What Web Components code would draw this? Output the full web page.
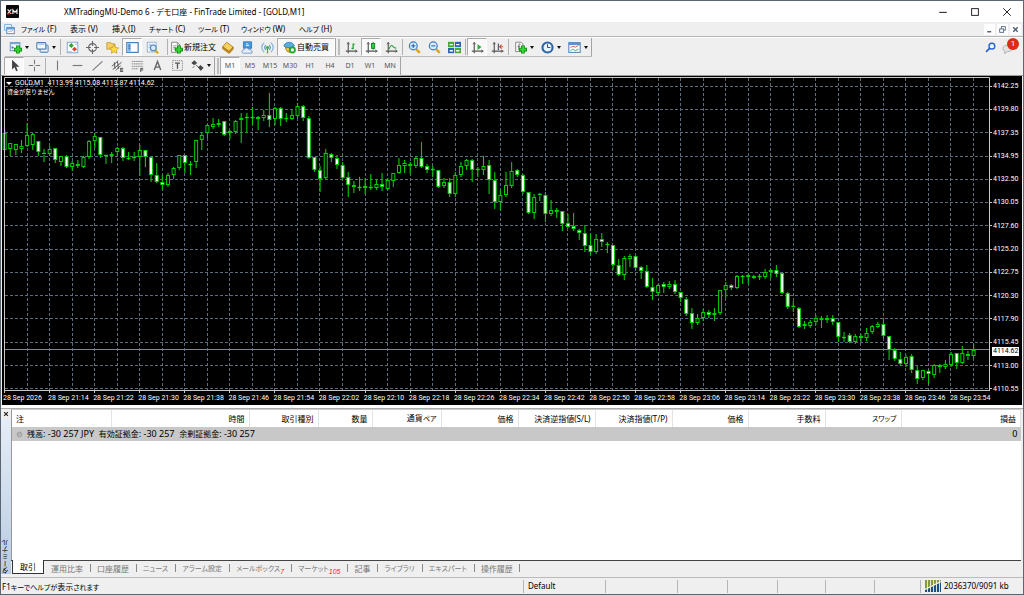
<!DOCTYPE html>
<html lang="ja">
<head>
<meta charset="utf-8">
<title>XMTradingMU-Demo 6</title>
<style>
html,body{margin:0;height:100%}
body{font:8px/12px "Noto Sans","Noto Sans CJK JP",sans-serif;color:#000;background:#fff;overflow:hidden}
</style>
</head>
<body>
<mt-window></mt-window>
<script>
const define=(name,html,setup)=>customElements.define(name,class extends HTMLElement{
  constructor(){super();this.attachShadow({mode:'open'});}
  connectedCallback(){
    const t=document.createElement('template');
    t.innerHTML=typeof html==='function'?html(this):html;
    this.shadowRoot.replaceChildren(t.content.cloneNode(true));
    if(setup)setup(this);
  }
});

const plus='<path d="M11 5.500v10M6 10.500h10" stroke="#128a12" stroke-width="4.600"/><path d="M11 6.500v8M7 10.500h8" stroke="#35d435" stroke-width="2.600"/>';
const axes='<path d="M4 2v13M1 12.500h14" stroke="#555" stroke-width="1.400" fill="none"/><path d="M2.500 4L4 1.500 5.500 4M12.500 11l2.500 1.500-2.500 1.500" fill="none" stroke="#555"/>';
const glass=s=>`<path d="M10 10l4.500 4.500" stroke="#d9a520" stroke-width="3"/><circle cx="6.500" cy="6" r="4.800" fill="#dcecfb" stroke="#3b7cc0" stroke-width="1.500"/>${s}`;
const ICONS={
 app:'<rect width="16" height="16" rx="1" fill="#080808"/><path d="M2 5.500l4.500 5.500M6.500 5.500L2 11M8.500 11V6l2.500 3 2.500-3v5" stroke="#eee" stroke-width="1.500" fill="none"/><path d="M2 11.500l4-2.500" stroke="#d22" stroke-width="1.300"/>',
 mdi:'<rect x="1" y="1" width="10" height="8" fill="#e9f2fb" stroke="#5c93cc"/><rect x="4" y="5" width="11" height="9" fill="#fff" stroke="#5c93cc" stroke-width="1.500"/><path d="M4 7h11" stroke="#5c93cc" stroke-width="2"/><path d="M6 12l2-2 2 1 3-2" stroke="#5c93cc" fill="none"/>',
 newchart:'<rect x="1.500" y="2" width="12" height="10" fill="#f4f9ff" stroke="#4a7fb5"/><path d="M1.500 3h12" stroke="#7aa9d8" stroke-width="2"/><path d="M4 6v4M3 8h3" stroke="#55779a"/>'+plus,
 profiles:'<rect x="5" y="5" width="10" height="9" rx="1" fill="#b7d1ed" stroke="#4a7fb5"/><rect x="1" y="2" width="11" height="8" rx="1" fill="#f3f8fe" stroke="#4a7fb5" stroke-width="1.300"/><path d="M3 4h7" stroke="#8ab3dc"/><path d="M6 11.500h8" stroke="#fff"/>',
 market:'<rect x="1.500" y="1.500" width="13" height="13" fill="#fff" stroke="#6a9bd0"/><path d="M3.500 5.500L6.500 2.500 9.500 5.500 6.500 8.500z" fill="#2aa82a"/><path d="M7.500 10l3-3 3 3-3 3z" fill="#e0402a"/><path d="M3 13h4M11 4h3" stroke="#aac"/>',
 cross:'<circle cx="8" cy="8" r="4.800" fill="none" stroke="#666" stroke-width="1.400"/><path d="M8 0v6M8 10v6M0 8h6M10 8h6" stroke="#666" stroke-width="1.400"/>',
 favorites:'<path d="M1 2h5l1 1.500h4V10H1z" fill="#f3cf68" stroke="#c2972c"/><path d="M10 4.500l1.700 3.500 3.800.500-2.800 2.600.700 3.900-3.400-1.900-3.400 1.900.700-3.900L4.500 8.500l3.800-.500z" fill="#ffdf45" stroke="#bc8b12" stroke-width=".8"/>',
 nav:'<rect x="1" y="2" width="14" height="12" fill="#fff" stroke="#4682bf" stroke-width="1.500"/><rect x="2" y="3" width="4" height="10" fill="#8db8e4"/><path d="M3 5h2M3 7h2M3 9h2" stroke="#2b5c94"/>',
 tester:'<rect x="1.500" y="1.500" width="11" height="12" fill="#f3f8fd" stroke="#89a9c8"/><path d="M3 5h8M5 3v8M3 8h7" stroke="#9cbcdc"/><path d="M11 11l4 4" stroke="#d9a520" stroke-width="2.500"/><circle cx="9" cy="8.500" r="3.500" fill="#d7e9fa" stroke="#4f86bd" stroke-width="1.300"/>',
 order:'<path d="M2 1.500h7l3 3V14H2z" fill="#fafafa" stroke="#777"/><path d="M9 1.500V5h3M4 6h4M4 8h4M4 10h2" fill="none" stroke="#888"/>'+plus,
 book:'<path d="M2 7l5-5.500 8 6-5 5.500z" fill="#f7cf5d" stroke="#a9781a"/><path d="M2 7v2.500l8 6 5-5.500V7.500L10 13z" fill="#c88f1f" stroke="#94640f" stroke-width=".7"/>',
 mail:'<path d="M3 1h10v8H3z" fill="#3f9ade" stroke="#2975b5"/><path d="M6 3.500h3M6 5.500h4" stroke="#fff"/><path d="M3 15c-3-.500-2.500-4 .500-4 .500-3 5-3.500 6-.500 2-1 3.500.500 3 1.800 2 .200 2 2.700 0 2.700z" fill="#e6eef8" stroke="#6488ba"/>',
 signal:'<path d="M4 2C0 5 0 11 4 14M12 2c4 3 4 9 0 12" fill="none" stroke="#7db1dc" stroke-width="1.400"/><path d="M6 5C4 7 4 9 6 11M10 5c2 2 2 4 0 6" fill="none" stroke="#5a9dc0" stroke-width="1.500"/><circle cx="8" cy="8" r="2" fill="#3db14a"/><path d="M8 9v6.500" stroke="#3db14a" stroke-width="1.500"/>',
 auto:'<path d="M3 7c0 9 10 9 10 0z" fill="#f2c23f" stroke="#a77b17"/><path d="M1 6c2-6 11-6 13 0-4 3-9 3-13 0z" fill="#5aaede" stroke="#2c7aac"/><circle cx="11.500" cy="11" r="4.300" fill="#25a825"/><circle cx="11.500" cy="11" r="2" fill="#fff"/>',
 bars:axes+'<path d="M10 3v7M8 9h2M10 4h2" stroke="#1d9a2c" stroke-width="1.500"/>',
 candles:axes+'<path d="M10 1v10" stroke="#117a1c"/><rect x="8" y="3" width="4" height="6" fill="#29cf3c" stroke="#117a1c"/>',
 linechart:axes+'<path d="M5 10c2-6 4-5 6-2l3 1" fill="none" stroke="#259b35" stroke-width="1.300"/>',
 zoomin:glass('<path d="M4 6h5M6.500 3.500v5" stroke="#2f6cae" stroke-width="1.400"/>'),
 zoomout:glass('<path d="M4 6h5" stroke="#2f6cae" stroke-width="1.400"/>'),
 tile:'<rect x="0" y="1" width="7.500" height="6.500" fill="#4aa834"/><rect x="8.500" y="1" width="7.500" height="6.500" fill="#2f62b4"/><rect x="0" y="8.500" width="7.500" height="6.500" fill="#2f62b4"/><rect x="8.500" y="8.500" width="7.500" height="6.500" fill="#4aa834"/><path d="M2 4.500h4M10 4.500h4M2 12h4M10 12h4" stroke="#fff" stroke-width="1.600"/>',
 scroll:axes+'<path d="M8 4l5 3.500L8 11z" fill="#2cae3c"/>',
 shift:axes+'<path d="M9 3v8" stroke="#346" stroke-width="1.300"/><path d="M15 7h-4M13 4.500L10.500 7 13 9.500" stroke="#d4482a" stroke-width="1.300" fill="none"/>',
 indic:'<path d="M2 1.500h7l2 2V13H2z" fill="#f8f8f8" stroke="#777"/><path d="M8 4c-2-1-2 0-2 2v5M4.500 7h3" stroke="#555" fill="none"/>'+plus,
 clock:'<circle cx="8" cy="8" r="6.200" fill="#eaf4fd" stroke="#2965a8" stroke-width="2.600"/><path d="M8 4v4h3.500" stroke="#444" stroke-width="1.200" fill="none"/>',
 template:'<rect x="1" y="2" width="14" height="12" fill="#fff" stroke="#5284b8" stroke-width="1.300"/><path d="M1 3.500h14" stroke="#5d93cb" stroke-width="3"/><path d="M3 8l3-1.500 3 1 4-2" stroke="#c84e34" fill="none"/><path d="M3 12l3-2 3 2 4-2" stroke="#37a046" fill="none"/>',
 pointer:'<path d="M5 1v12l3-3 2 5 2-1-2-4.500h4z" fill="#444"/>',
 xhair:'<path d="M8 1v5.500M8 9.500V15M1 8h5.500M9.500 8H15" stroke="#777" stroke-width="1.300"/>',
 vline:'<path d="M8 2v12" stroke="#777" stroke-width="1.400"/>',
 hline:'<path d="M2 8h12" stroke="#777" stroke-width="1.400"/>',
 trend:'<path d="M2 14L14 3" stroke="#777" stroke-width="1.300"/>',
 channel:'<path d="M1 9l8-7M2 13L13 4M6 14l6-6M4 4l1 8M8 3l1 9" stroke="#555" stroke-width="1.200"/><path d="M12 11.500h3M12 13.500h3M12 15.500h3M12 11v5" stroke="#333"/>',
 fibo:'<path d="M1 3h14M1 6h14M1 9h14M1 12h8" stroke="#777" stroke-dasharray="2 .6"/><path d="M12 16v-4.500h3M12 13.500h3" stroke="#333" fill="none"/>',
 textA:'<path d="M4 13.500L8 3l4 10.500M5.500 10h5" fill="none" stroke="#666" stroke-width="1.700"/>',
 label:'<rect x="2" y="2" width="12" height="12" fill="none" stroke="#777" stroke-dasharray="1.500 1"/><path d="M5 5h6M8 5v7" stroke="#555" stroke-width="1.600"/>',
 arrows:'<path d="M1 5l3-3 3 3-3 2zM9 10l3-2 3 3-3 3zM6 7l4 4M4 9l-2 2" fill="#444" stroke="#444"/>',
 search:'<circle cx="10" cy="6" r="4.200" fill="#f1f7ff" stroke="#2b62ce" stroke-width="2"/><path d="M7 9l-5.500 5.500" stroke="#2b62ce" stroke-width="2.500"/>',
 bubble:'<path d="M1 9c0-5 12-5 12 0 0 3-4 4-6 4l-4 2.500.500-3C2 12 1 11 1 9z" fill="#e2e2e2" stroke="#aaa"/>',
 min:'<path d="M3 8.500h10" stroke="#222" stroke-width="1.400"/>',
 max:'<rect x="3.500" y="3.500" width="9" height="9" fill="none" stroke="#222" stroke-width="1.300"/>',
 close:'<path d="M3 3l10 10M13 3L3 13" stroke="#222" stroke-width="1.300"/>',
 mmin:'<path d="M4 12h7" stroke="#4b5d73" stroke-width="2.500"/>',
 mrest:'<rect x="6" y="3" width="7" height="6" fill="none" stroke="#4b5d73" stroke-width="1.500"/><rect x="3" y="7" width="7" height="6" fill="#fff" stroke="#4b5d73" stroke-width="1.500"/>',
 mclose:'<path d="M4 4l8 8M12 4l-8 8" stroke="#4b5d73" stroke-width="2.500"/>',
 xclose:'<path d="M3 3l10 10M13 3L3 13" stroke="#222" stroke-width="3"/>',
 dot:'<circle cx="8" cy="8" r="5.500" fill="#bbb" stroke="#8b8b8b" stroke-width="1.500"/><path d="M5 10l6-4M5 6h4" stroke="#999"/>',
 traffic:'<rect y="2" width="16" height="12" fill="#87983a"/><path d="M0 14v-2l16-8v10z" fill="#1c4f7c"/><path d="M2.500 2v12M5.500 2v12M8.500 2v12M11.500 2v12M14.500 2v12" stroke="#eee" stroke-width=".9"/><path d="M0 11.500l16-8" stroke="#eee" stroke-width="1.300"/>'
};
define('mt-icon',el=>`<style>:host{display:inline-flex;flex:none;width:var(--size,13px);height:var(--size,13px)}svg{width:100%;height:100%}</style><svg viewBox="0 0 16 16" fill="none" aria-hidden="true">${ICONS[el.getAttribute('name')]||''}</svg>`);

define('mt-titlebar',`<style>
:host{display:flex;align-items:center;height:21px;background:#fff;padding-left:5px}
h1{font:inherit;margin:0 0 0 45px;flex:1;white-space:nowrap;font-feature-settings:"palt"}
button{all:unset;width:32px;display:flex;justify-content:center}
</style><mt-icon name="app"></mt-icon><h1><slot></slot></h1>
<button aria-label="最小化"><mt-icon name="min" style="--size:12px"></mt-icon></button><button aria-label="最大化"><mt-icon name="max" style="--size:12px"></mt-icon></button><button aria-label="閉じる"><mt-icon name="close" style="--size:12px"></mt-icon></button>`);

define('mt-menubar',`<style>
:host{display:flex;align-items:center;height:14px;background:#efefef;padding-left:3px;border-bottom:1px solid #b5b5b5}
nav{display:grid;grid-template-columns:49px 42px 37px 49px 43px 58px 40px;flex:1;margin-left:6px}
nav button{all:unset;white-space:nowrap;font-feature-settings:"palt"}
nav small{font-size:7px}
.w{all:unset;background:#fff;width:11px;height:11px;display:flex;align-items:center;justify-content:center;margin-right:2px}
</style><mt-icon name="mdi" style="--size:11px"></mt-icon>
<nav><button><small>ファイル</small> (F)</button><button>表示 (V)</button><button>挿入(I)</button><button><small>チャート</small> (C)</button><button><small>ツール</small> (T)</button><button><small>ウィンドウ</small> (W)</button><button><small>ヘルプ</small> (H)</button></nav>
<button class="w" aria-label="チャートを最小化"><mt-icon name="mmin" style="--size:9px"></mt-icon></button><button class="w" aria-label="元に戻す"><mt-icon name="mrest" style="--size:9px"></mt-icon></button><button class="w" aria-label="チャートを閉じる"><mt-icon name="mclose" style="--size:9px"></mt-icon></button>`);

define('mt-tool',el=>`<style>
:host{display:flex}
button{all:unset;box-sizing:border-box;width:var(--w,20px);height:18px;display:flex;align-items:center;justify-content:center;white-space:nowrap;gap:1px;font-size:var(--fs,8px);color:inherit;border:1px solid transparent}
:host([on]) button{background:#f9f9f9;border-color:#aaa #fff #fff #aaa}
:host([caret]) button{width:27px;gap:3px}
i{border:2px solid transparent;border-top:3px solid #111;border-bottom:0}
</style><button title="${el.getAttribute('tip')||''}">${el.hasAttribute('icon')?`<mt-icon name="${el.getAttribute('icon')}"></mt-icon>`:''}<slot></slot>${el.hasAttribute('caret')?'<i></i>':''}</button>`);
define('mt-sep',`<style>:host{display:block;width:1px;height:16px;margin:0 1px;background:#b0b0b0}:host([wide]){margin:0 1px 0 5px}:host([end]){height:18px;margin:0;background:#a5a5a5}:host([grip]){width:2px;margin:0 1px 0 2px;background:#bcbcbc}</style>`);

define('mt-toolbars',`<style>
:host{display:block;background:#efefef;border-bottom:1px solid #9a9a9a}
.row{display:flex;align-items:center;height:19px}
.one{border-top:1px solid #fff;padding-left:4px}
.two{padding-left:3px;height:18px;color:#555}
.one .group,.two .group{display:flex;align-items:center;height:18px;border-bottom:1px solid #bbb}
.sp{flex:1}
.alert{position:relative;display:flex;margin:0 8px 0 6px}
.alert b{position:absolute;left:5px;top:-3px;width:12px;height:12px;border-radius:50%;background:#dd2c14;color:#fff;font:8px/12px Roboto,sans-serif;text-align:center}
.two mt-tool{--fs:7px}
</style>
<div class="row one"><div class="group">
<mt-tool icon="newchart" caret></mt-tool><mt-tool icon="profiles" caret></mt-tool><mt-sep></mt-sep>
<mt-tool icon="market"></mt-tool><mt-tool icon="cross"></mt-tool><mt-tool icon="favorites"></mt-tool><mt-tool icon="nav" on></mt-tool><mt-tool icon="tester"></mt-tool><mt-sep wide></mt-sep>
<mt-tool icon="order" style="--w:48px">新規注文</mt-tool><mt-tool icon="book"></mt-tool><mt-tool icon="mail"></mt-tool><mt-tool icon="signal"></mt-tool><mt-tool icon="auto" on style="--w:58px">自動売買</mt-tool>
<mt-sep end></mt-sep><mt-sep grip></mt-sep>
<mt-tool icon="bars"></mt-tool><mt-tool icon="candles" on></mt-tool><mt-tool icon="linechart"></mt-tool><mt-sep></mt-sep>
<mt-tool icon="zoomin"></mt-tool><mt-tool icon="zoomout"></mt-tool><mt-tool icon="tile"></mt-tool><mt-sep></mt-sep>
<mt-tool icon="scroll" on></mt-tool><mt-tool icon="shift"></mt-tool><mt-sep></mt-sep>
<mt-tool icon="indic" caret></mt-tool><mt-tool icon="clock" caret></mt-tool><mt-tool icon="template" caret></mt-tool><mt-sep end></mt-sep>
</div><span class="sp"></span><mt-icon name="search" style="--size:11px"></mt-icon><span class="alert"><mt-icon name="bubble"></mt-icon><b>1</b></span></div>
<div class="row two"><div class="group">
<mt-tool icon="pointer" on></mt-tool><mt-tool icon="xhair"></mt-tool><mt-sep></mt-sep>
<mt-tool icon="vline"></mt-tool><mt-tool icon="hline"></mt-tool><mt-tool icon="trend"></mt-tool><mt-tool icon="channel"></mt-tool><mt-tool icon="fibo"></mt-tool><mt-tool icon="textA"></mt-tool><mt-tool icon="label"></mt-tool><mt-tool icon="arrows" caret></mt-tool>
<mt-sep end></mt-sep><mt-sep grip></mt-sep>
<mt-tool on>M1</mt-tool><mt-tool>M5</mt-tool><mt-tool>M15</mt-tool><mt-tool>M30</mt-tool><mt-tool>H1</mt-tool><mt-tool>H4</mt-tool><mt-tool>D1</mt-tool><mt-tool>W1</mt-tool><mt-tool>MN</mt-tool><mt-sep end></mt-sep>
</div></div>`);

/* One entry per minute: kind (o rising, w falling, d flat), high, body top, body bottom, low */
const BARS=`o129,133,150,150 o143,143,149,155 o144,144,150,154 o140,146,149,152 o123,135,146,146 o133,134,145,149 w141,141,152,155 d149,153,155,161 o146,149,154,155 w148,148,160,162 o156,156,162,165 w155,156,167,167 o161,163,167,170 w160,164,166,167 o156,157,167,167 o140,141,157,158 o133,136,141,147 w137,137,155,157 d155,155,156,163 o152,154,156,162 o147,148,152,155 w147,148,158,160 d152,158,159,159 d152,157,158,160 o145,150,157,175 w150,150,157,166 w157,157,175,181 w163,175,182,182 w175,182,185,189 o173,175,185,186 o167,168,175,178 o155,155,168,169 w155,155,163,172 d161,164,165,174 o140,140,162,167 o132,135,140,149 o124,125,133,137 o118,124,127,128 o119,123,125,126 w121,121,135,135 o130,131,133,138 o120,121,132,133 o113,118,120,142 d113,117,118,132 d107,117,118,124 w116,117,119,129 o110,115,118,120 w93,115,120,126 o107,108,119,124 w107,108,119,125 d113,118,119,121 o110,115,119,119 o103,106,116,117 w105,106,118,120 w116,118,158,158 w157,157,170,171 w166,170,179,191 o149,153,178,179 w153,154,158,161 w155,158,165,168 w162,165,178,178 w172,177,185,196 w181,185,187,192 d177,187,188,190 w178,186,188,193 d174,187,188,189 o179,184,188,189 w173,184,187,190 o178,180,189,189 o173,173,181,186 o158,165,173,173 o160,163,166,172 w162,164,166,173 o156,158,166,167 w142,158,167,167 w164,166,170,172 d166,169,170,176 w170,170,187,187 o178,182,186,187 w178,182,194,196 o172,175,194,196 o162,166,175,176 o159,160,166,169 w159,160,170,181 d167,169,170,176 o156,166,170,174 w160,165,180,193 w172,180,202,208 o190,195,202,209 o172,185,195,196 o162,171,186,187 w169,170,175,176 w174,175,192,193 w192,192,213,213 o194,197,213,218 d193,194,196,200 w192,195,214,221 o200,210,214,215 w208,210,212,217 w211,211,224,230 w214,223,227,227 w213,226,229,230 w229,230,233,239 w225,233,246,251 w234,245,252,254 o234,239,252,253 w233,239,242,246 d242,244,245,252 w245,245,265,269 w259,265,275,275 o256,258,275,279 o254,256,259,266 w256,256,268,270 w266,267,271,278 w265,271,287,287 w278,287,292,299 o284,285,293,295 w282,284,287,292 o281,284,287,288 w280,284,292,293 w292,292,298,301 w297,299,314,315 w308,313,323,328 o314,318,323,324 o309,312,318,320 w310,312,315,317 o308,313,315,320 o290,290,313,314 o282,285,290,297 w284,285,288,289 o275,276,288,288 d275,276,277,283 o274,275,277,283 w275,276,278,278 d274,276,277,279 o269,272,277,278 o269,270,272,277 w265,270,274,276 w273,273,293,293 w292,293,307,308 d301,306,308,311 w307,308,327,327 w321,324,326,328 o320,322,326,327 o315,318,322,324 w316,318,320,327 w315,318,320,322 w315,318,322,324 w322,322,337,341 d332,337,338,341 w333,335,342,342 o334,336,342,343 w334,336,338,341 o328,333,338,340 o325,326,332,333 o322,324,327,327 w318,324,336,337 w336,336,350,359 w348,350,359,360 w352,359,364,365 o355,357,364,366 w354,356,370,372 w366,370,379,383 o370,370,378,379 w369,371,374,383 o364,365,375,377 w364,365,367,372 o360,364,367,368 o352,354,365,366 w353,353,363,368 o346,353,363,363 w351,354,356,359 o344,350,356,357`;
const plot=()=>{
  const step=969/172;let s='';
  for(let i=0;i<14;i++){const y=Math.round(86+i*302/13)+.5;s+=`<path class="g" d="M5 ${y}H990"/>`;}
  for(let i=1;i<=43;i++){const x=Math.floor(4.5+i*step*4)+.5;s+=`<path class="g" d="M${x} 78V390"/>`;}
  s+='<path d="M5 349.500H990" stroke="#7c8894"/>';
  BARS.split(' ').forEach((b,i)=>{
    const [h,t,l,lo]=b.slice(1).split(',').map(Number),x=4.6+i*step;
    s+=`<path stroke="#00cc00" stroke-width="1.1" d="M${x} ${h}V${t}M${x} ${l}V${lo+1}"/>`;
    if(b[0]==='d')s+=`<path stroke="#00d800" stroke-width="1.4" d="M${x-2} ${t+.5}h4"/>`;
    else s+=`<rect x="${x-1.5}" y="${t+.5}" width="3" height="${Math.max(l-t-1,1)}" fill="${b[0]==='w'?'#fff':'#000'}" stroke="#00d000"/>`;
  });
  s+='<path d="M4.500 390V77.500H989.500V391M4 390.500H990" stroke="#c8c8c8" fill="none"/>';
  for(let i=0;i<22;i++)s+=`<path stroke="#c8c8c8" d="M${Math.round(4+i*45.070)+.5} 390v3"/>`;
  for(let i=0;i<14;i++)s+=`<path stroke="#c8c8c8" d="M990 ${Math.round(86+i*302/13)+.5}h2"/>`;
  return s;
};
const prices='4142.25 4139.80 4137.35 4134.95 4132.50 4130.05 4127.60 4125.20 4122.75 4120.30 4117.90 4115.45 4113.00 4110.55'.split(' ');
const times='2026 21:14 21:22 21:30 21:38 21:46 21:54 22:02 22:10 22:18 22:26 22:34 22:42 22:50 22:58 23:06 23:14 23:22 23:30 23:38 23:46 23:54'.split(' ');
define('mt-chart',()=>`<style>
:host{display:grid;grid-template-columns:minmax(0,1fr) 30px;grid-template-rows:minmax(0,1fr) 12px;background:#000;color:#fff;font:7px/10px Roboto,"Noto Sans CJK JP",sans-serif;white-space:nowrap}
.plot{position:relative;min-height:0}
svg{display:block;width:100%;height:100%}
.g{stroke:#5d6b7b;stroke-dasharray:3 2}
.cap{position:absolute;left:4px;top:2px;display:flex;align-items:center;gap:3px}
.cap i{border:3px solid transparent;border-top-color:#fff;border-bottom:0}
.note{position:absolute;left:5px;top:11px;font-size:6px}
.prices{position:relative;display:flex;flex-direction:column;justify-content:space-between;margin:5px 0 -1px 1px}
.prices b{position:absolute;left:-1px;top:85%;background:#fff;color:#000;font-weight:400;line-height:9px;padding:0 1px}
.times{display:grid;grid-template-columns:repeat(22,minmax(0,1fr));padding-left:1px;margin-right:-3px}
</style>
<div class="plot"><svg viewBox="2 76 990 317" preserveAspectRatio="none">${plot()}</svg>
<div class="cap"><i></i><span>GOLD,M1&nbsp; 4113.99 4115.08 4113.87 4114.62</span></div><div class="note">資金が足りません</div></div>
<div class="prices">${prices.map(p=>`<span>${p}</span>`).join('')}<b>4114.62</b></div>
<div class="times">${times.map(t=>`<span>28 Sep ${t}</span>`).join('')}</div>`);

define('mt-terminal',()=>{
const cols=[99,138,69,54,69,77,77,77,76,77,76];
const heads='注 時間 取引種別 数量 通貨<small>ペア</small> 価格 決済逆指値(S/L) 決済指値(T/P) 価格 手数料 <small>スワップ</small> 損益'.split(' ');
const tabs=['運用比率','口座履歴','<small>ニュース</small>','<small>アラーム設定</small>','<small>メールボックス</small><sub>7</sub>','<small>マーケット</small><sub>105</sub>','記事','<small>ライブラリ</small>','<small>エキスパート</small>','操作履歴'];
return `<style>
:host{display:grid;grid-template-columns:10px minmax(0,1fr);background:#efefef;height:168px;border-top:1px solid #aaa}
small{font-size:7px}
.side{display:flex;flex-direction:column;align-items:center;justify-content:space-between;background:linear-gradient(#e8eff7,#b9cce2);margin-bottom:3px}
.side button{all:unset;background:#efefef;height:9px;width:10px;display:flex;align-items:center;justify-content:center}
.side span{writing-mode:vertical-rl;transform:rotate(180deg);line-height:10px;font-size:7px}
.main{display:flex;flex-direction:column;min-height:0;margin-right:2px}
.data{flex:1;background:#fff;border-left:1px solid #999;border-top:1px solid #ccc}
table{border-collapse:collapse;table-layout:fixed;width:100%;line-height:12px}
th,td{font-weight:400;text-align:right;padding:2px 4px 2px 0;height:12px;border-right:1px solid #e3e3e3;white-space:nowrap;font-feature-settings:"palt"}
th:first-child{text-align:left;padding-left:4px}
tbody td{background:#c8c8c8;border:0;padding:1px 3px 1px 4px;height:11px;font-size:9px}
td:first-child{text-align:left}
td span{font-size:8px}
td mt-icon{vertical-align:-1px;margin-right:4px}
.tabs{display:flex;align-items:flex-start;height:16px;border-top:1px solid #444;padding-left:1px;color:#777;line-height:13px}
.tabs button{all:unset;padding:0 7px;position:relative;white-space:nowrap;height:14px;font-feature-settings:"palt"}
.tabs button+button+button::before{content:"";position:absolute;left:0;top:3px;height:8px;border-left:1px solid #888}
.tabs button:last-child::after{content:"";position:absolute;right:0;top:3px;height:8px;border-left:1px solid #888}
.tabs .on{background:#fff;color:#000;border:1px solid #333;border-top:0;margin-top:-1px;box-sizing:border-box}
sub{color:#f22;font:italic 7px/7px "Liberation Sans",sans-serif;vertical-align:-3px}
</style>
<div class="side"><button aria-label="閉じる"><mt-icon name="xclose" style="--size:6px"></mt-icon></button><span>ターミナル</span></div>
<div class="main"><div class="data"><table><colgroup>${cols.map(w=>`<col style="width:${w}px">`).join('')}<col></colgroup>
<thead><tr>${heads.map(h=>`<th>${h}</th>`).join('')}</tr></thead>
<tbody><tr><td colspan="11"><mt-icon name="dot" style="--size:7px"></mt-icon><span>残高</span>: -30 257 JPY&nbsp; <span>有効証拠金</span>: -30 257&nbsp; <span>余剰証拠金</span>: -30 257</td><td>0</td></tr></tbody></table></div>
<div class="tabs"><button class="on">取引</button>${tabs.map(t=>`<button>${t}</button>`).join('')}</div></div>`;});

define('mt-status',`<style>
:host{display:grid;grid-template-columns:minmax(0,1fr) 82px 72px 50px 50px 48px 49px 46px 103px;height:16px;background:#efefef;border-top:1px solid #bbb;align-items:center;white-space:nowrap;font-feature-settings:"palt"}
div{height:13px;border-left:1px solid #b4b4b4;padding-left:4px;display:flex;align-items:center;gap:3px}
.help{display:block;line-height:13px;border:0;padding-left:1px}
small{font-size:7px}
</style><div class="help">F1<small>キーでヘルプが</small>表示<small>されます</small></div><div>Default</div><div></div><div></div><div></div><div></div><div></div><div></div><div><mt-icon name="traffic" style="--size:16px"></mt-icon>2036370/9091 kb</div>`);

define('mt-window',`<style>
:host{display:flex;flex-direction:column;height:100vh;box-sizing:border-box;border:1px solid #5b6674;background:#efefef}
mt-chart{flex:1;min-height:0;margin:0 1px 0 1px}
mt-terminal,mt-status,mt-titlebar,mt-menubar,mt-toolbars{flex:none}
.gap{height:3px;background:#fff}
</style><mt-titlebar>XMTradingMU-Demo 6 - デモ口座 - FinTrade Limited - [GOLD,M1]</mt-titlebar><mt-menubar></mt-menubar><mt-toolbars></mt-toolbars><mt-chart></mt-chart><div class="gap"></div><mt-terminal></mt-terminal><mt-status></mt-status>`);
</script>
</body>
</html>
